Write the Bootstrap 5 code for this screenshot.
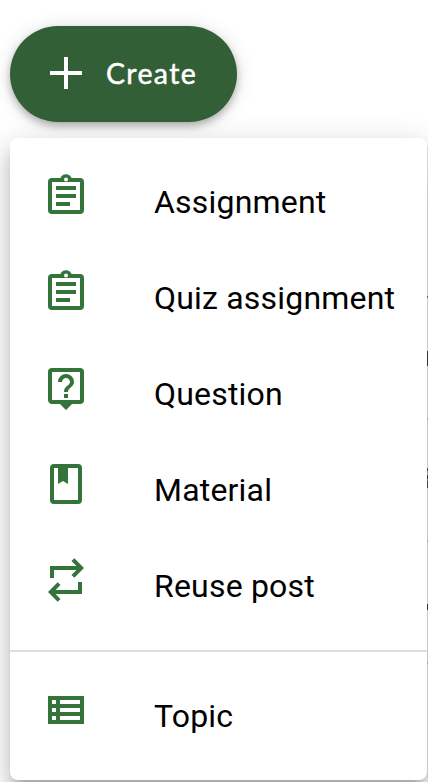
<!DOCTYPE html>
<html lang="en">
<head>
<meta charset="utf-8">
<meta name="viewport" content="width=device-width, initial-scale=1">
<title>Create menu</title>
<link href="https://cdn.jsdelivr.net/npm/bootstrap@5.3.0/dist/css/bootstrap.min.css" rel="stylesheet">
<style>
body { width: 428px; height: 782px; font-family: Roboto, sans-serif; }
main { padding: 26px 0 0 10px; }
.create-btn {
  --bs-btn-color: #fff; --bs-btn-bg: #325f35; --bs-btn-hover-bg: #2b542e; --bs-btn-hover-color: #fff;
  width: 227px; height: 96px; padding: 0 0 2px 40px; gap: 24px;
  font: 400 28.5px/1 Lato, sans-serif; letter-spacing: 1.35px; -webkit-text-stroke: .5px #fff;
  box-shadow: 0 4px 8px -2px rgba(0,0,0,.2), 0 4px 10px rgba(0,0,0,.14), 0 2px 20px rgba(0,0,0,.12);
}
.create-menu {
  width: 417px; height: 642px; padding: 16px 0; border-radius: 8px; margin-top: 16px;
  box-shadow: 0 10px 10px -6px rgba(0,0,0,.2), 0 16px 20px 2px rgba(0,0,0,.14), 0 6px 28px 4px rgba(0,0,0,.12);
}
.create-menu .dropdown-item {
  height: 96px; padding: 18px 0 0 32px; gap: 64px; font-size: 32px; line-height: 60px;
  letter-spacing: .2px; color: #000;
}
.create-menu svg { width: 48px; height: 48px; fill: #34733a; }
.create-menu .dropdown-divider { margin: 16px 0; border-top: 2px solid #dedede; opacity: 1; }
/* edge of the class stream that shows beside the menu */
.stream-edge {
  right: 0; top: 146px; width: 1px; height: 632px;
  background: linear-gradient(#dcdcdc, #c9c9c9 60px, #c9c9c9 150px, #4c7650 150px 152px, #c9c9c9 152px 205px, #333 205px 220px,
    #c9c9c9 220px 272px, #aaa 272px 274px, #c9c9c9 274px 322px, #444 322px 325px, #999 325px 329px,
    #333 329px 333px, #888 333px 335px, #444 335px 342px, #c9c9c9 342px 394px, #aaa 394px 396px,
    #c9c9c9 396px 458px, #333 458px 464px, #c9c9c9 464px 516px, #aaa 516px 518px, #c9c9c9 518px);
}
</style>
</head>
<body class="bg-white overflow-hidden position-relative">
<main class="d-flex flex-column align-items-start">
  <button class="btn create-btn rounded-pill border-0 d-flex align-items-center" type="button">
    <svg width="32" height="32" viewBox="0 0 32 32" fill="#fff"><path d="M14 0h4v14h14v4H18v14h-4V18H0v-4h14z"/></svg>
    <span>Create</span>
  </button>
  <div class="create-menu bg-white">
    <a class="dropdown-item d-flex align-items-start" href="#">
      <svg viewBox="0 0 24 24"><path fill-rule="evenodd" d="M19 3h-4.2a3 3 0 0 0-5.6 0H5a2 2 0 0 0-2 2v14a2 2 0 0 0 2 2h14a2 2 0 0 0 2-2V5a2 2 0 0 0-2-2zM12 2.75a1 1 0 1 1 0 2 1 1 0 0 1 0-2zM5 5h14v14H5zM7 7h10v2H7zM7 11h10v2H7zM7 15h7v2H7z"/></svg>
      <span>Assignment</span></a>
    <a class="dropdown-item d-flex align-items-start" href="#">
      <svg viewBox="0 0 24 24"><path fill-rule="evenodd" d="M19 3h-4.2a3 3 0 0 0-5.6 0H5a2 2 0 0 0-2 2v14a2 2 0 0 0 2 2h14a2 2 0 0 0 2-2V5a2 2 0 0 0-2-2zM12 2.75a1 1 0 1 1 0 2 1 1 0 0 1 0-2zM5 5h14v14H5zM7 7h10v2H7zM7 11h10v2H7zM7 15h7v2H7z"/></svg>
      <span>Quiz assignment</span></a>
    <a class="dropdown-item d-flex align-items-start" href="#">
      <svg viewBox="0 0 24 24"><path d="M19 2H5a2 2 0 0 0-2 2v14c0 1.1.9 2 2 2h4l3 3 3-3h4a2 2 0 0 0 2-2V4a2 2 0 0 0-2-2zm0 16H5V4h14v14zM11 15h2v2h-2zM12 7c1.1 0 2 .9 2 2 0 2-3 1.75-3 5h2c0-2.25 3-2.5 3-5a4 4 0 0 0-8 0h2c0-1.1.9-2 2-2z"/></svg>
      <span>Question</span></a>
    <a class="dropdown-item d-flex align-items-start" href="#">
      <svg viewBox="0 0 24 24"><path fill-rule="evenodd" d="M18 2H6a2 2 0 0 0-2 2v16a2 2 0 0 0 2 2h12a2 2 0 0 0 2-2V4a2 2 0 0 0-2-2zM6 4h2v8l2.5-1.5L13 12V4h5v16H6z"/></svg>
      <span>Material</span></a>
    <a class="dropdown-item d-flex align-items-start" href="#">
      <svg viewBox="0 0 24 24"><path d="M16.15 1.15 21 6l-4.85 4.85-1.4-1.4L17.2 7H6v4H4V5h13.2l-2.45-2.45zM7.85 22.85 3 18l4.85-4.85 1.4 1.4L6.8 17H18v-4h2v6H6.8l2.45 2.45z"/></svg>
      <span>Reuse post</span></a>
    <hr class="dropdown-divider">
    <a class="dropdown-item d-flex align-items-start" href="#">
      <svg viewBox="0 0 24 24"><path fill-rule="evenodd" d="M3 5h18v14H3zM5 7v2h2V7zM9 7v2h10V7zM5 11v2h2v-2zM9 11v2h10v-2zM5 15v2h2v-2zM9 15v2h10v-2z"/></svg>
      <span>Topic</span></a>
  </div>
</main>
<div class="stream-edge position-absolute"></div>
<script src="https://cdn.jsdelivr.net/npm/bootstrap@5.3.0/dist/js/bootstrap.bundle.min.js"></script>
</body>
</html>
